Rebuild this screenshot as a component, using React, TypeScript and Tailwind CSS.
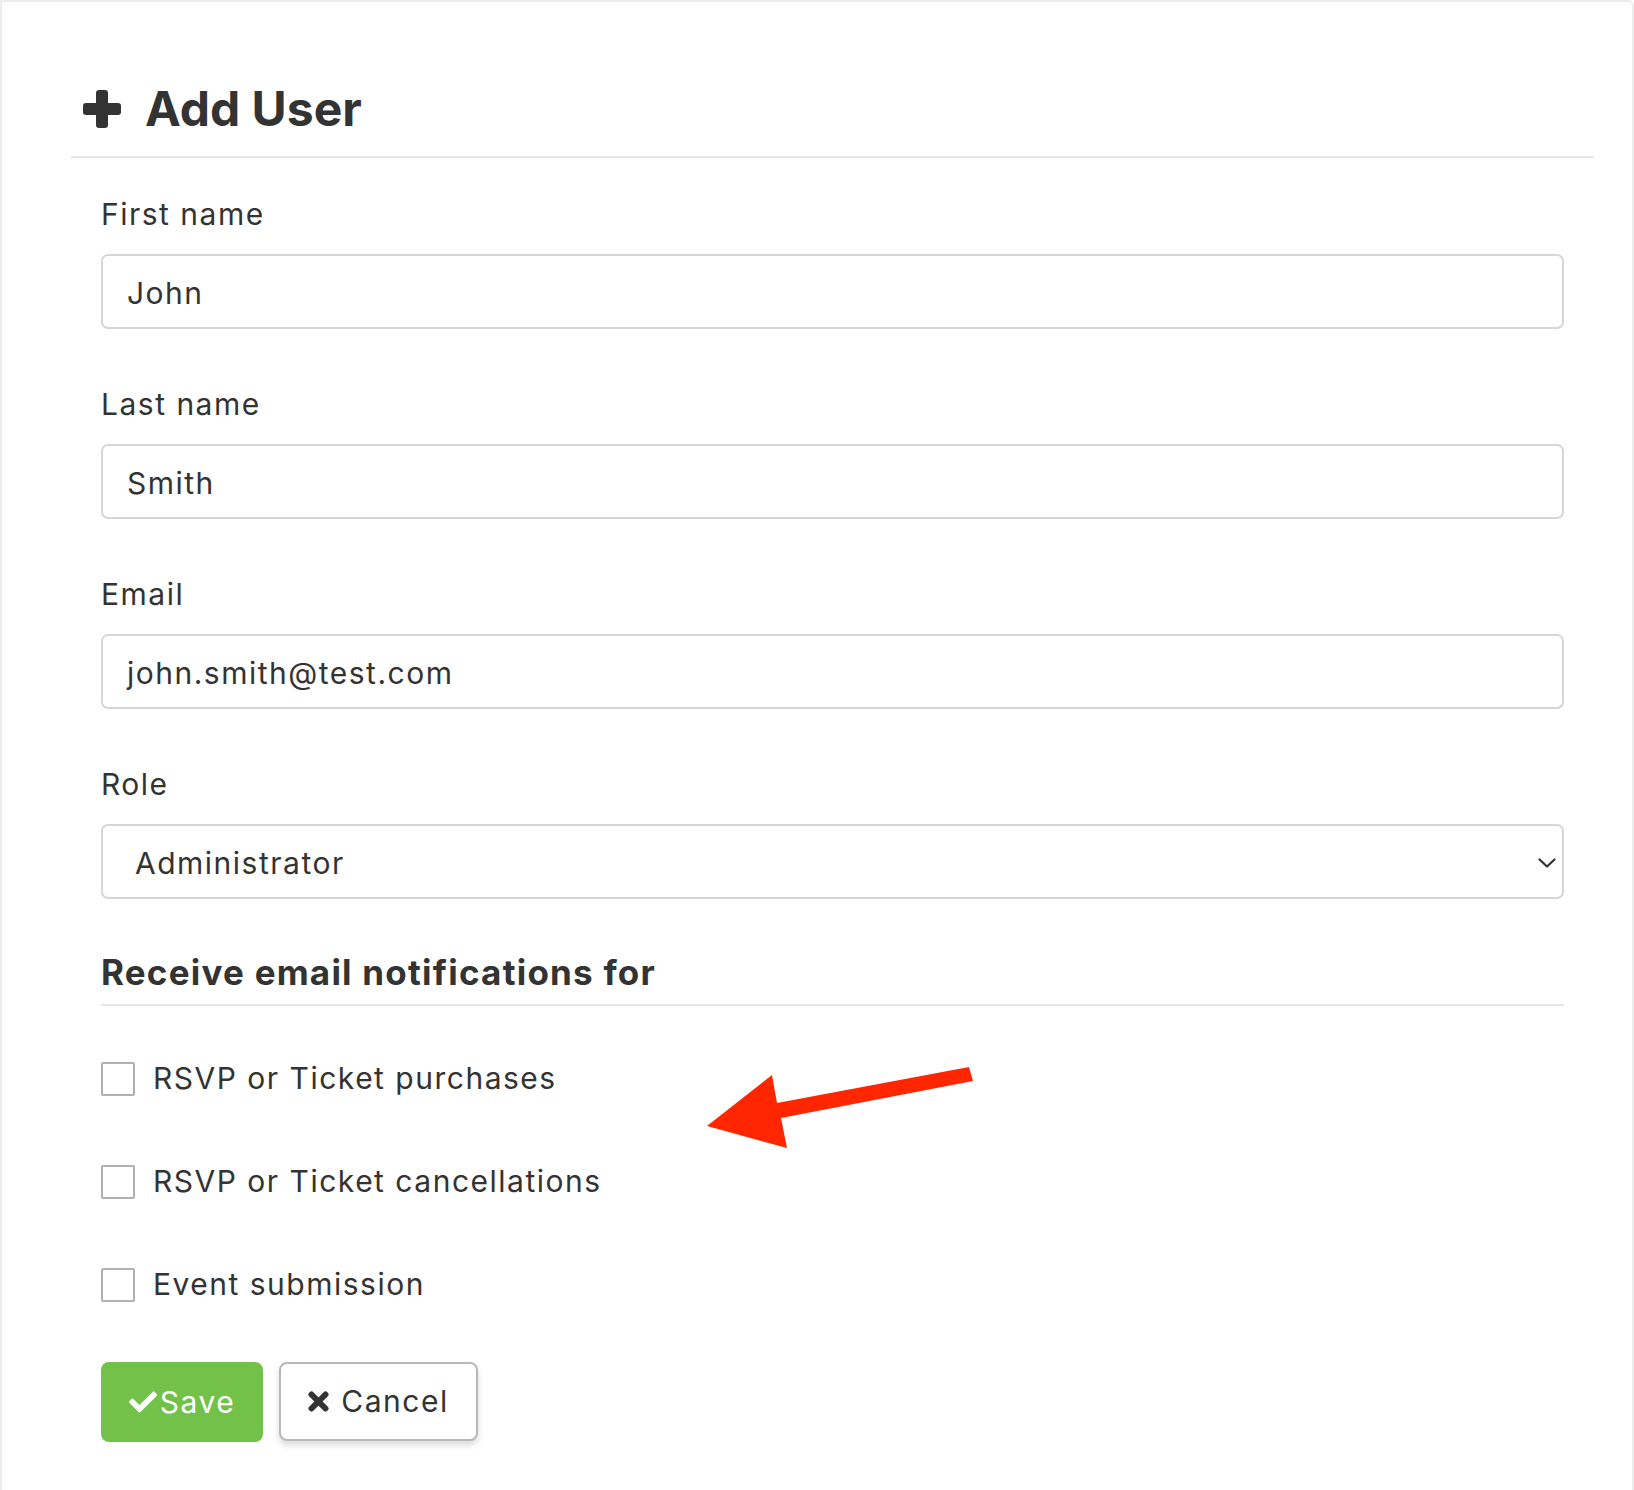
import React from "react";
import { FaCheck } from "react-icons/fa";

const font = { fontFamily: "Inter, 'Noto Sans', sans-serif" };

function Field({ label, value }: { label: string; value: string }) {
  return (
    <div className="mb-[53px]">
      <div className="text-[30px] leading-[45px] tracking-[0.05em] text-[#333333] mb-[17px]">{label}</div>
      <div className="h-[75px] border-2 border-[#d3d6da] rounded-[7px] bg-white flex items-center pl-[24px] pt-[3px] text-[30px] tracking-[0.05em] text-[#333333]">
        {value}
      </div>
    </div>
  );
}

function Check({ label }: { label: string }) {
  return (
    <div className="h-[45px] flex items-center">
      <div className="w-[34px] h-[34px] border-2 border-[#b0b0b0] rounded-[2px] bg-white shrink-0" />
      <span className="ml-[18px] text-[30px] leading-[45px] tracking-[0.05em] text-[#333333]">{label}</span>
    </div>
  );
}

export default function App() {
  return (
    <div style={font} className="relative w-[1634px] min-h-[1490px] bg-white border-t-2 border-l-2 border-r-2 border-[#ececec] rounded-tr-[6px] overflow-hidden">
      <div className="ml-[69px] mr-[38px]">
        <div className="pt-[77px] pb-[17px] border-b-2 border-[#e6e6e6] flex items-center">
          <svg width="38" height="38" viewBox="0 0 38 38" className="ml-[12px] shrink-0">
            <rect x="0" y="13" width="38" height="12" rx="3" fill="#333333" />
            <rect x="13" y="0" width="12" height="38" rx="3" fill="#333333" />
          </svg>
          <h1 className="ml-[24px] text-[48px] leading-[60px] font-bold text-[#333333]">Add User</h1>
        </div>

        <div className="px-[30px] pt-[34px]">
          <Field label="First name" value="John" />
          <Field label="Last name" value="Smith" />
          <Field label="Email" value="john.smith@test.com" />

          <div className="mb-[53px]">
            <div className="text-[30px] leading-[45px] tracking-[0.05em] text-[#333333] mb-[17px]">Role</div>
            <div className="relative h-[75px] border-2 border-[#d3d6da] rounded-[7px] bg-white flex items-center pl-[32px] pt-[3px] text-[30px] tracking-[0.05em] text-[#333333]">
              Administrator
              <svg width="18" height="10" viewBox="0 0 18 10" className="absolute right-[6px] top-[32px]">
                <path d="M1.5 1.5 L9 8.5 L16.5 1.5" fill="none" stroke="#333333" strokeWidth="2.2" strokeLinecap="round" strokeLinejoin="round" />
              </svg>
            </div>
          </div>

          <div className="pb-[12px] border-b-2 border-[#e6e6e6] text-[35px] leading-[40px] tracking-[0.035em] font-bold text-[#333333]">
            Receive email notifications for
          </div>

          <div className="mt-[50px] flex flex-col gap-[58px]">
            <Check label="RSVP or Ticket purchases" />
            <Check label="RSVP or Ticket cancellations" />
            <Check label="Event submission" />
          </div>

          <div className="mt-[55px] flex items-start gap-[16px]">
            <button className="h-[80px] w-[162px] rounded-[8px] bg-[#72c149] text-white text-[30px] tracking-[0.05em] flex items-center justify-center">
              <FaCheck size={28} className="mr-[3px]" />
              <span>Save</span>
            </button>
            <button className="h-[79px] w-[199px] rounded-[8px] bg-white border-2 border-[#b8b8b8] shadow-[0_4px_6px_rgba(0,0,0,0.15)] text-[#333333] text-[30px] tracking-[0.05em] flex items-center justify-center">
              <svg width="21" height="21" viewBox="0 0 21 21" className="mr-[12px]">
                <path d="M3.5 3.5 L17.5 17.5 M17.5 3.5 L3.5 17.5" stroke="#333333" strokeWidth="6" strokeLinecap="round" />
              </svg>
              <span>Cancel</span>
            </button>
          </div>
        </div>
      </div>

      <svg width="280" height="95" viewBox="0 0 280 95" className="absolute left-[698px] top-[1058px] pointer-events-none">
        <polygon points="7,66 72,15 77,43 269,7 273,21 81,58 87,88" fill="#ff2600" />
      </svg>
    </div>
  );
}
